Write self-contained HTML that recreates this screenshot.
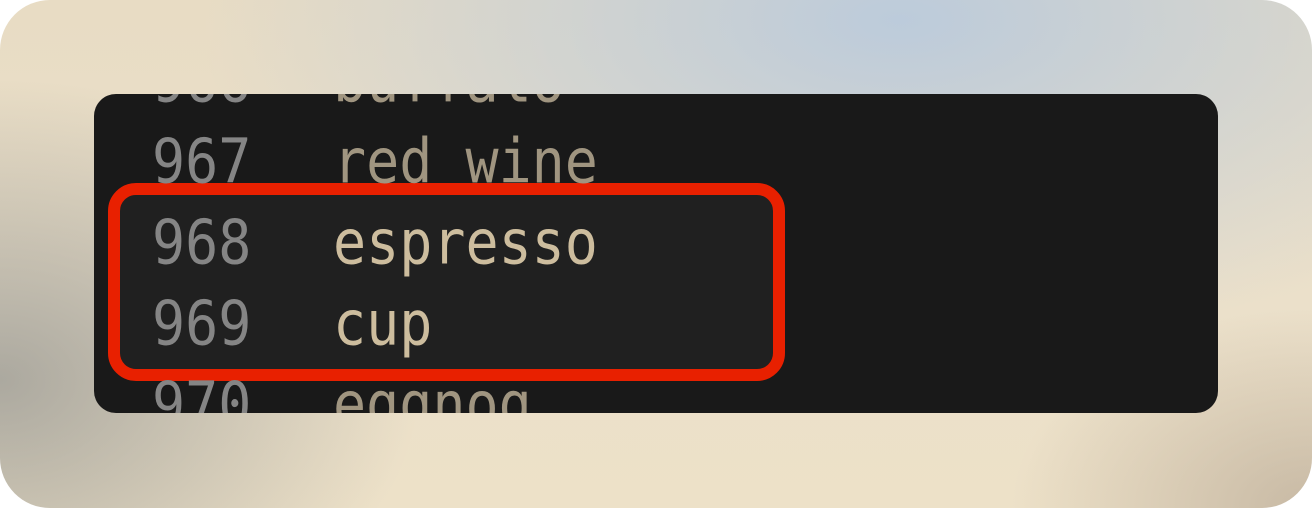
<!DOCTYPE html>
<html><head><style>
html,body{margin:0;padding:0;background:#fff;}
.outer{position:absolute;left:0;top:0;width:1312px;height:508px;border-radius:50px;overflow:hidden;
background:
radial-gradient(ellipse 420px 300px at 0px 380px, rgba(150,150,145,0.75), rgba(150,150,145,0) 100%),
radial-gradient(ellipse 300px 200px at 1312px 508px, rgba(190,175,155,0.8), rgba(190,175,155,0) 100%),
radial-gradient(ellipse 700px 330px at 900px 20px, #bccbdb, rgba(188,203,219,0) 100%),
linear-gradient(180deg,#e8dcc4 0%,#ebe0ca 60%,#ede1c8 100%);}
.panel{position:absolute;left:94px;top:94px;width:1124px;height:319px;border-radius:22px;background:#191919;overflow:hidden;}
.line{position:absolute;left:0;height:80px;font-family:"DejaVu Sans Mono","Liberation Mono",monospace;font-size:55px;white-space:pre;transform-origin:0 100%;}
.line span{position:absolute;top:0;}
.n{left:58px;color:#858585;}
.t{left:239px;}
.box{position:absolute;left:14px;top:89px;width:677px;height:198px;border:12px solid #e82000;border-radius:28px;background:#202020;box-sizing:border-box;}
</style></head><body>
<div class="outer">
<div class="panel">
<div class="box"></div>
<div class="line" style="top:-40px;transform:scaleY(1.12)"><span class="n">966</span><span class="t" style="color:#a09580">buffalo</span></div>
<div class="line" style="top:41px;transform:scaleY(1.12)"><span class="n">967</span><span class="t" style="color:#a09580">red wine</span></div>
<div class="line" style="top:122px;transform:scaleY(1.12)"><span class="n">968</span><span class="t" style="color:#cdbd9e">espresso</span></div>
<div class="line" style="top:203px;transform:scaleY(1.12)"><span class="n">969</span><span class="t" style="color:#cdbd9e">cup</span></div>
<div class="line" style="top:284px;transform:scaleY(1.12)"><span class="n">970</span><span class="t" style="color:#a09580">eggnog</span></div>
</div>
</div>
</body></html>
